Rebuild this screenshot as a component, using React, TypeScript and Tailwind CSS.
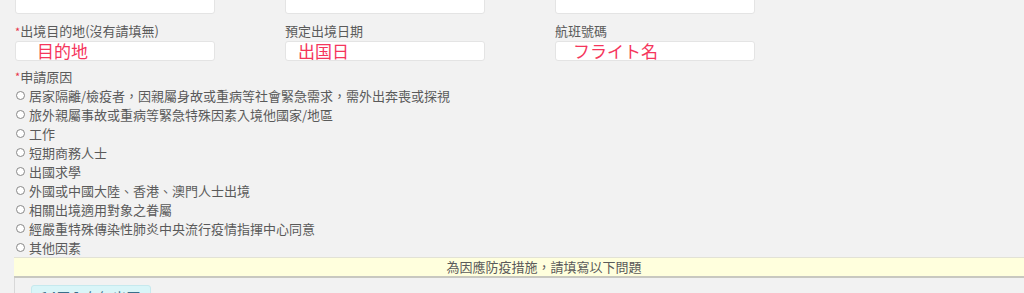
import React from 'react'

const reasons = [
  '居家隔離/檢疫者，因親屬身故或重病等社會緊急需求，需外出奔喪或探視',
  '旅外親屬事故或重病等緊急特殊因素入境他國家/地區',
  '工作',
  '短期商務人士',
  '出國求學',
  '外國或中國大陸、香港、澳門人士出境',
  '相關出境適用對象之眷屬',
  '經嚴重特殊傳染性肺炎中央流行疫情指揮中心同意',
  '其他因素',
]

const Field = ({ label, required, value, pad }: { label: string; required?: boolean; value: string; pad: string }) => (
  <div className="w-[200px] flex flex-col">
    <div className="h-[20px] leading-[20px] text-[13px] text-[#5a5a5a]">
      {required && <span className="text-[#e8344a] text-[11px] align-top">*</span>}
      {label}
    </div>
    <div className={`h-[20px] bg-white rounded-[3px] border border-[#e4e4e4] text-[17px] leading-[18px] text-[#f5365c] ${pad}`}>
      {value}
    </div>
  </div>
)

const App = () => {
  return (
    <div
      className="w-[1024px] h-[293px] overflow-hidden bg-[#f2f2f2]"
      style={{ fontFamily: '"Noto Sans CJK TC", "Noto Sans", sans-serif' }}
    >
      <div className="pl-[15px] flex gap-[70px] -mt-[7px]">
        <div className="w-[200px] h-[21px] bg-white rounded-[3px] border border-[#e4e4e4]" />
        <div className="w-[200px] h-[21px] bg-white rounded-[3px] border border-[#e4e4e4]" />
        <div className="w-[200px] h-[21px] bg-white rounded-[3px] border border-[#e4e4e4]" />
      </div>

      <div className="pl-[15px] flex gap-[70px] mt-[7px]">
        <Field label="出境目的地(沒有請填無)" required value="目的地" pad="pl-[21px]" />
        <Field label="預定出境日期" value="出国日" pad="pl-[12px]" />
        <Field label="航班號碼" value="フライト名" pad="pl-[17px]" />
      </div>

      <div className="pl-[15px] mt-[6px] h-[19px] leading-[19px] text-[13px] text-[#5a5a5a]">
        <span className="text-[#e8344a] text-[11px] align-top">*</span>申請原因
      </div>

      <div className="pl-[15px] flex flex-col">
        {reasons.map((r) => (
          <div key={r} className="h-[19px] flex items-center text-[13px] text-[#5a5a5a]">
            <span className="w-[9px] h-[9px] rounded-full border border-[#888] bg-white mr-[4px] ml-[1px]" />
            {r}
          </div>
        ))}
      </div>

      <div className="ml-[14px] w-[1060px] h-[21px] bg-[#ffffdd] border-t border-[#e2e2d6] border-b-2 border-b-[#c8c8c0] text-center text-[13px] leading-[18px] text-[#5a5a5a]">
        為因應防疫措施，請填寫以下問題
      </div>

      <div className="ml-[14px] border-l border-[#d8d8d8] h-[40px] pl-[16px] pt-[6px]">
        <div className="inline-block h-[24px] px-[9px] pt-[3px] bg-[#d9f5f8] border border-[#c6e9ee] rounded-[3px] text-[14px] leading-[16px] text-[#3a6f8a]">
          14天內有無出國
        </div>
      </div>
    </div>
  )
}

export default App
